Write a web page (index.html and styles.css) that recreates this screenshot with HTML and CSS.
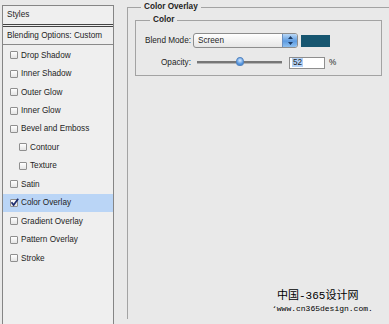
FILE: index.html
```html
<!DOCTYPE html>
<html lang="en">
<head>
    <meta charset="UTF-8">
    <meta name="viewport" content="width=device-width, initial-scale=1.0">
    <title>Layer Style - Color Overlay</title>
    <link rel="stylesheet" href="styles.css">
</head>
<body>
    <div class="styles-panel">
        <div class="panel-title">Styles</div>
        <div class="panel-blend">Blending Options: Custom</div>
        <ul class="style-list">
            <li class="style-item"><span class="check"></span>Drop Shadow</li>
            <li class="style-item"><span class="check"></span>Inner Shadow</li>
            <li class="style-item"><span class="check"></span>Outer Glow</li>
            <li class="style-item"><span class="check"></span>Inner Glow</li>
            <li class="style-item"><span class="check"></span>Bevel and Emboss</li>
            <li class="style-item sub"><span class="check"></span>Contour</li>
            <li class="style-item sub"><span class="check"></span>Texture</li>
            <li class="style-item"><span class="check"></span>Satin</li>
            <li class="style-item active">
                <span class="check checked">
                    <svg width="9" height="9" viewBox="0 0 9 9"><path d="M1.5 4.2 L3.6 7 L8.2 0.8" fill="none" stroke="#1c2b6e" stroke-width="1.7"/></svg>
                </span>Color Overlay
            </li>
            <li class="style-item"><span class="check"></span>Gradient Overlay</li>
            <li class="style-item"><span class="check"></span>Pattern Overlay</li>
            <li class="style-item"><span class="check"></span>Stroke</li>
        </ul>
    </div>

    <fieldset class="group outer">
        <legend>Color Overlay</legend>
        <fieldset class="group inner">
            <legend>Color</legend>
            <div class="field-row blend-row">
                <span class="field-label">Blend Mode:</span>
                <div class="select">
                    <span class="select-text">Screen</span>
                    <span class="select-arrows">
                        <svg width="7" height="11" viewBox="0 0 7 11"><path d="M3.5 1 L6 4 L1 4 Z M3.5 10 L6 7 L1 7 Z" fill="#1d3c66"/></svg>
                    </span>
                </div>
                <span class="swatch"></span>
            </div>
            <div class="field-row opacity-row">
                <span class="field-label">Opacity:</span>
                <div class="slider"><span class="slider-thumb"></span></div>
                <span class="num-input"><span class="num-selected">52</span></span>
                <span class="unit">%</span>
            </div>
        </fieldset>
    </fieldset>

    <div class="watermark">
        <div class="wm-cn">中国-365设计网</div>
        <div class="wm-url">‘www.cn365design.com.</div>
    </div>
</body>
</html>
```

FILE: styles.css
```css
body {
    margin: 0;
    width: 389px;
    height: 324px;
    overflow: hidden;
    display: flex;
    align-items: flex-start;
    background: #e9e9e9;
    font-family: "Liberation Sans", Arial, sans-serif;
    font-size: 8.2px;
    color: #1e1e1e;
}

.styles-panel {
    box-sizing: border-box;
    width: 112px;
    height: 319px;
    margin: 5px 0 0 2px;
    border: 1px solid #858585;
    border-bottom: none;
    background: #efefef;
    flex-shrink: 0;
}

.panel-title {
    height: 18px;
    line-height: 18px;
    padding-left: 4px;
    border-bottom: 3px double #444;
}

.panel-blend {
    height: 17px;
    line-height: 17px;
    padding-left: 4px;
    border-bottom: 1px solid #8a8a8a;
}

.style-list {
    list-style: none;
    margin: 0;
    padding: 1px 0 0;
}

.style-item {
    display: flex;
    align-items: center;
    height: 18.45px;
    padding-left: 7px;
}

.style-item.sub {
    padding-left: 16px;
}

.style-item.active {
    background: #bad5f6;
}

.check {
    box-sizing: border-box;
    width: 8px;
    height: 8px;
    margin-right: 3px;
    border: 1px solid #8f8f8f;
    border-radius: 1px;
    background: linear-gradient(#ffffff, #e4e4e4);
    position: relative;
}

.check svg {
    position: absolute;
    left: -1px;
    top: -2px;
}

.group {
    margin: 0;
    border: 1px solid #a3a3a3;
}

.group legend {
    padding: 0 3px;
    line-height: 10px;
    font-weight: bold;
}

.outer {
    box-sizing: border-box;
    width: 262px;
    height: 317px;
    margin: 2px 0 0 13px;
    padding: 3px 0 0 7px;
    border-right: none;
    border-bottom: none;
    flex-shrink: 0;
}

.outer > legend {
    margin-left: 6px;
}

.inner {
    box-sizing: border-box;
    width: 247px;
    padding: 8px 0 6px 8px;
}

.inner > legend {
    margin-left: 6px;
}

.field-row {
    display: flex;
    align-items: center;
}

.blend-row {
    height: 15px;
}

.opacity-row {
    height: 13px;
    margin-top: 8px;
}

.field-label {
    width: 47px;
    text-align: right;
    flex-shrink: 0;
}

.select {
    box-sizing: border-box;
    display: flex;
    align-items: center;
    width: 105px;
    height: 15px;
    margin-left: 2px;
    border: 1px solid #8d8d8d;
    border-radius: 3px;
    background: linear-gradient(#ffffff, #e6e6e6);
    overflow: hidden;
}

.select-text {
    flex: 1;
    padding-left: 4px;
}

.select-arrows {
    display: flex;
    align-items: center;
    justify-content: center;
    width: 14px;
    height: 100%;
    background: linear-gradient(#b9d8f7, #5d9be0 55%, #8ec0f0);
    border-left: 1px solid #6a8fc0;
}

.swatch {
    width: 29px;
    height: 12px;
    margin-left: 3px;
    background: #175670;
}

.slider {
    position: relative;
    width: 85px;
    height: 2px;
    margin-left: 6px;
    background: #777;
    border-bottom: 1px solid #b5b5b5;
}

.slider-thumb {
    position: absolute;
    left: 39px;
    top: -4px;
    width: 8px;
    height: 9px;
    border-radius: 50% 50% 45% 45%;
    background: radial-gradient(circle at 50% 35%, #d6e9ff, #4b8fdc 70%);
    border: 1px solid #5585c0;
    box-sizing: border-box;
}

.num-input {
    box-sizing: border-box;
    display: flex;
    align-items: center;
    width: 36px;
    height: 12px;
    margin-left: 7px;
    padding-left: 2px;
    border: 1px solid #8e8e8e;
    background: #fff;
}

.num-selected {
    background: #b3d2f7;
    padding: 0 1px;
    line-height: 9px;
}

.unit {
    margin-left: 4px;
}

.watermark {
    position: absolute;
    left: 272px;
    top: 290px;
    font-family: "Liberation Mono", "Noto Sans CJK SC", monospace;
    color: #000;
}

.wm-cn {
    font-size: 11px;
    line-height: 13px;
    padding-left: 5px;
}

.wm-url {
    font-size: 8px;
    line-height: 12px;
}
```
